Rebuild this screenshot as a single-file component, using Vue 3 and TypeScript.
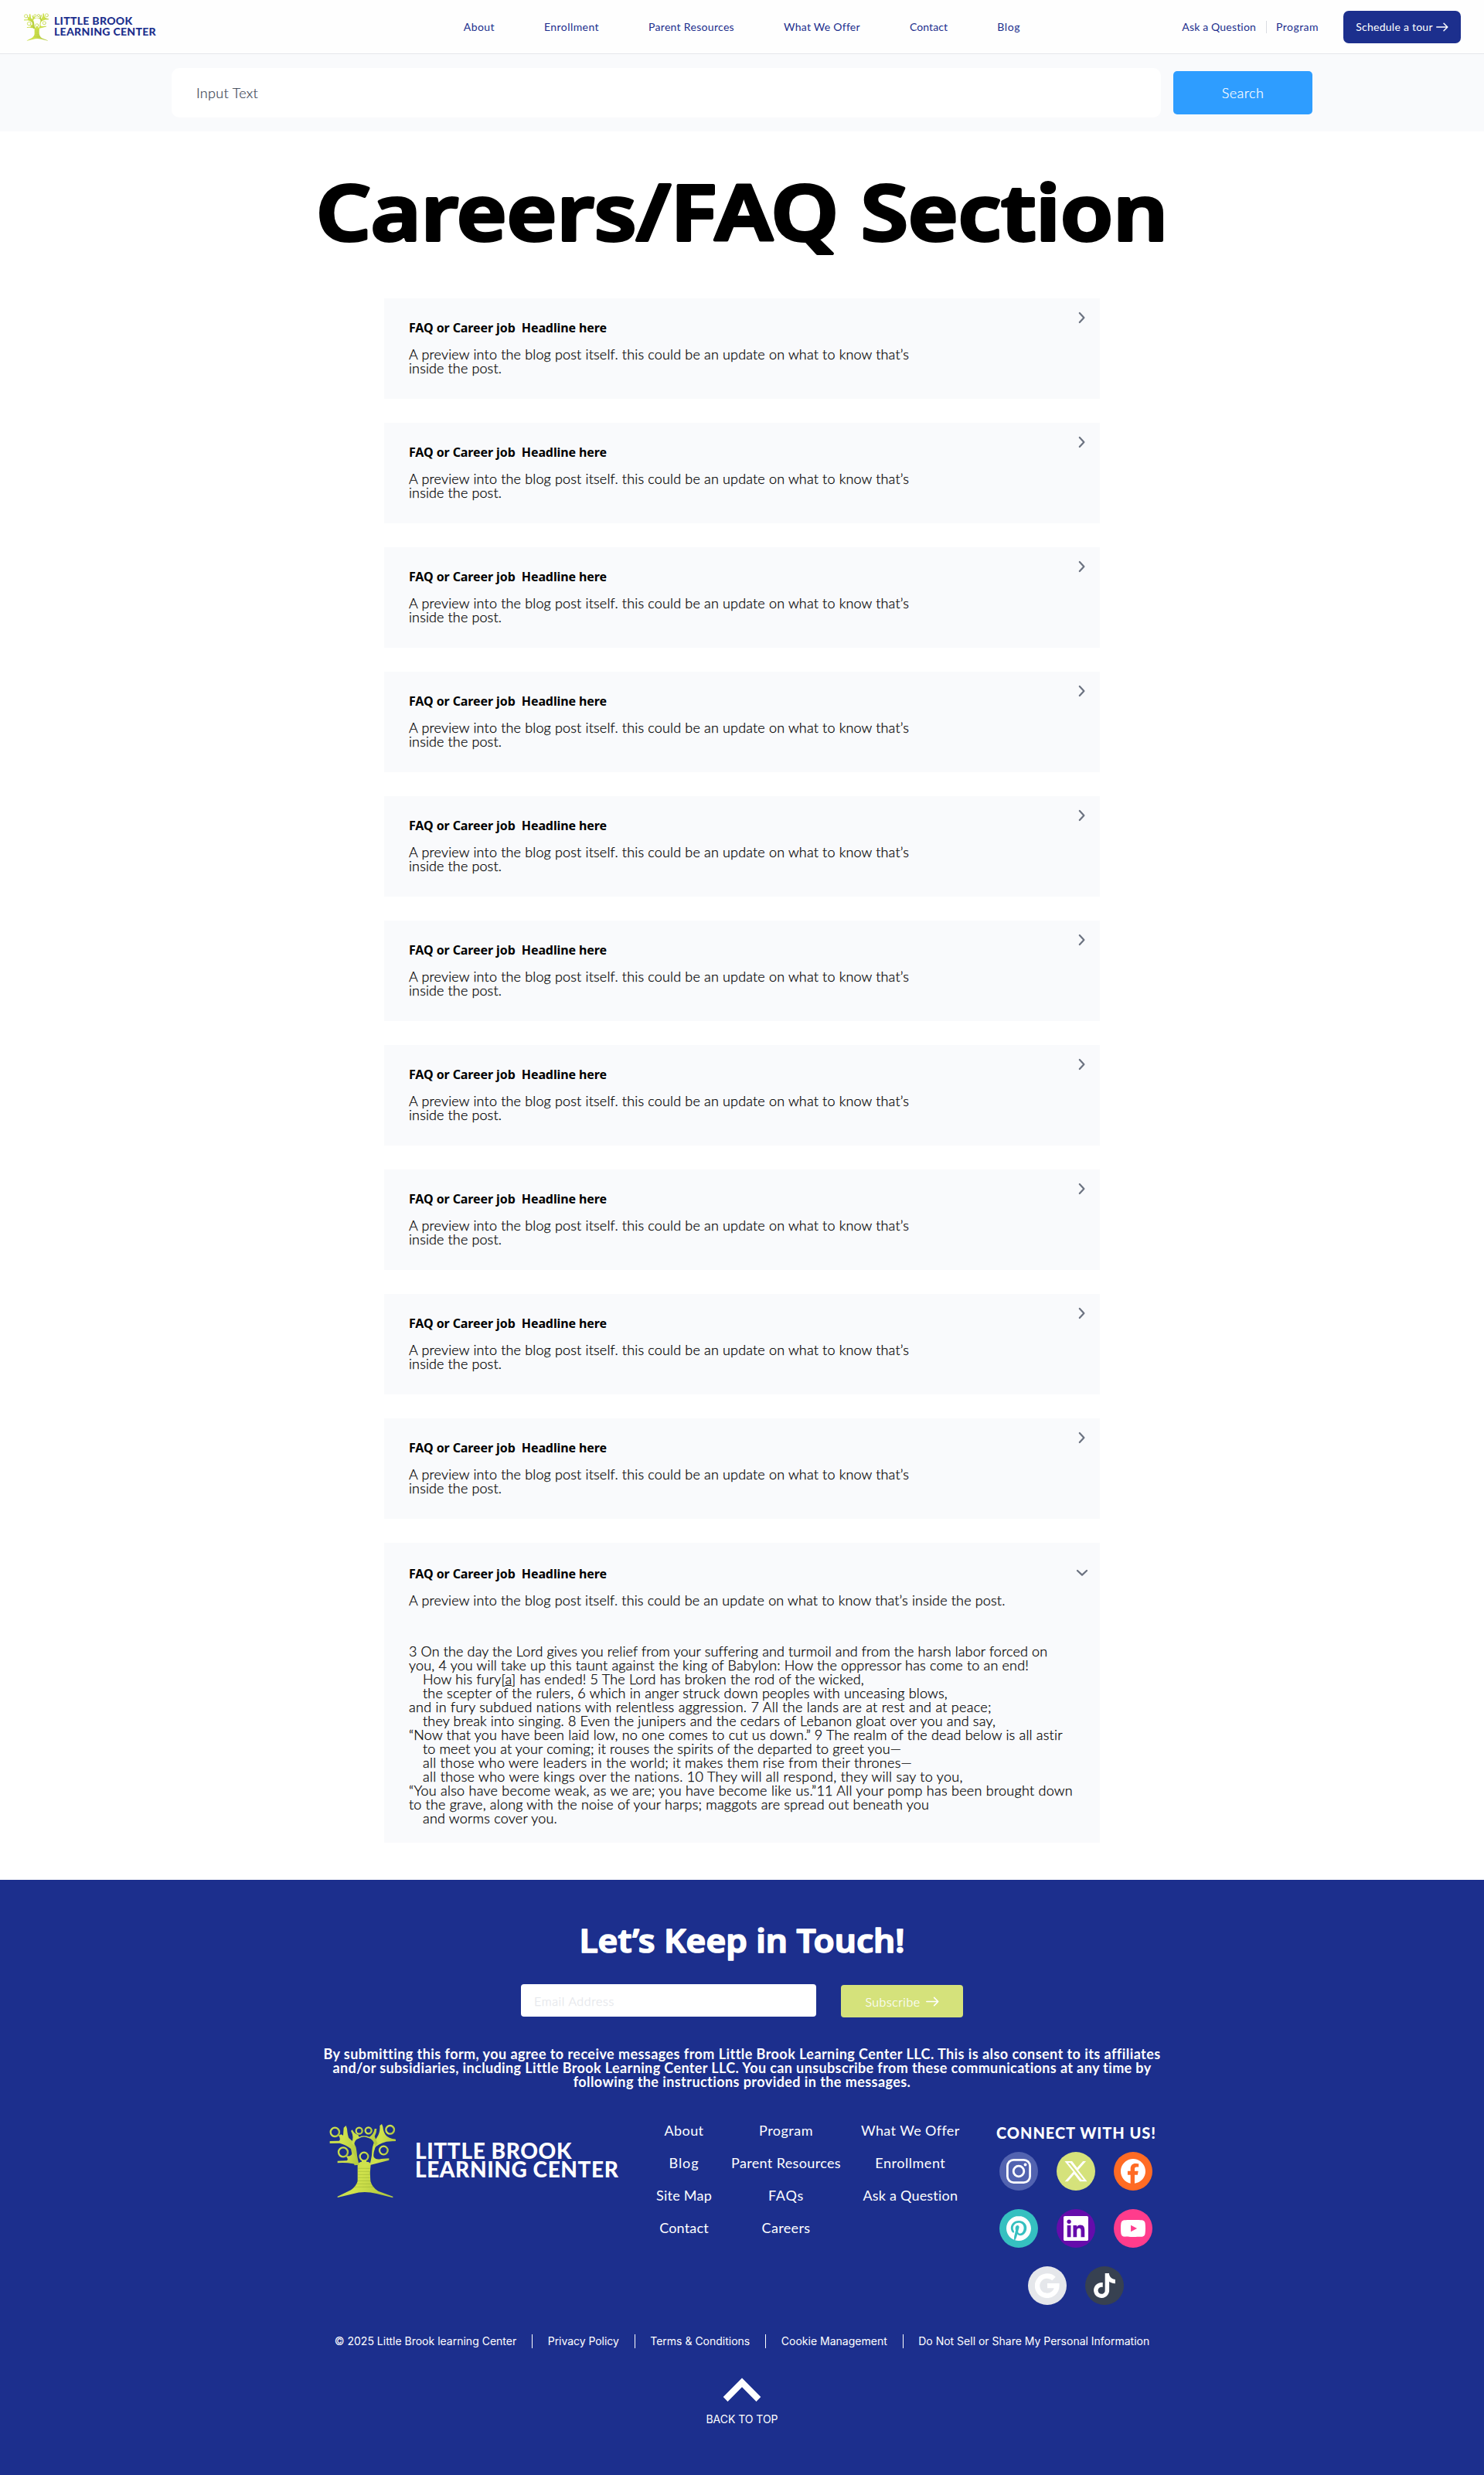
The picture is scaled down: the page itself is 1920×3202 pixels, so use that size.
<script setup lang="ts">
import type { Directive } from 'vue'

// Tracks a single line of text so that it fills the given width in pixels.
const vFit: Directive<HTMLElement, number> = {
  mounted(el, { value }) {
    const count = (el.textContent ?? '').length
    const natural = el.getBoundingClientRect().width
    if (count > 0) el.style.letterSpacing = `${((value - natural) / count).toFixed(4)}px`
  },
}

interface Item { label: string; width: number }
interface Verse { text: string; note?: string; rest?: string; width: number; indent?: boolean }
interface Social { name: string; color: string; path?: string; shape?: string }

const nav: Item[] = [
  { label: 'About', width: 40.2 },
  { label: 'Enrollment', width: 71 },
  { label: 'Parent Resources', width: 111 },
  { label: 'What We Offer', width: 98.4 },
  { label: 'Contact', width: 49.3 },
  { label: 'Blog', width: 30 },
]

const headline = 'FAQ or Career job\u00a0 Headline here'
const closedCards = Array.from({ length: 10 }, (_, i) => i)

const verses: Verse[] = [
  { text: '3 On the day the Lord gives you relief from your suffering and turmoil and from the harsh labor forced on', width: 825.5 },
  { text: 'you, 4 you will take up this taunt against the king of Babylon: How the oppressor has come to an end!', width: 802 },
  { text: 'How his fury[', note: 'a', rest: '] has ended! 5 The Lord has broken the rod of the wicked,', width: 571, indent: true },
  { text: 'the scepter of the rulers, 6 which in anger struck down peoples with unceasing blows,', width: 679, indent: true },
  { text: 'and in fury subdued nations with relentless aggression. 7 All the lands are at rest and at peace;', width: 754 },
  { text: 'they break into singing. 8 Even the junipers and the cedars of Lebanon gloat over you and say,', width: 741, indent: true },
  { text: '“Now that you have been laid low, no one comes to cut us down.” 9 The realm of the dead below is all astir', width: 846 },
  { text: 'to meet you at your coming; it rouses the spirits of the departed to greet you—', width: 619, indent: true },
  { text: 'all those who were leaders in the world; it makes them rise from their thrones—', width: 633, indent: true },
  { text: 'all those who were kings over the nations. 10 They will all respond, they will say to you,', width: 699, indent: true },
  { text: '“You also have become weak, as we are; you have become like us.”11 All your pomp has been brought down', width: 859 },
  { text: 'to the grave, along with the noise of your harps; maggots are spread out beneath you', width: 673 },
  { text: 'and worms cover you.', width: 174, indent: true },
]

const consent: Item[] = [
  { label: 'By submitting this form, you agree to receive messages from Little Brook Learning Center LLC. This is also consent to its affiliates', width: 1081 },
  { label: 'and/or subsidiaries, including Little Brook Learning Center LLC. You can unsubscribe from these communications at any time by', width: 1059 },
  { label: 'following the instructions provided in the messages.', width: 437 },
]

const columns: Item[][] = [
  [{ label: 'About', width: 51 }, { label: 'Blog', width: 39 }, { label: 'Site Map', width: 72 }, { label: 'Contact', width: 63.5 }],
  [{ label: 'Program', width: 70 }, { label: 'Parent Resources', width: 142 }, { label: 'FAQs', width: 46 }, { label: 'Careers', width: 63 }],
  [{ label: 'What We Offer', width: 127 }, { label: 'Enrollment', width: 91 }, { label: 'Ask a Question', width: 123 }],
]

const socialRows: Social[][] = [
  [
    { name: 'Instagram', color: '#5263b0', shape: 'instagram' },
    { name: 'X', color: '#d5e27b', path: 'M18.9 2.2h2.9l-7.6 8.7L22.9 21.9h-7l-5.5-7.1-6.2 7.1H1.3l8.2-9.3L1.1 2.2h7.2l4.9 6.5ZM17.6 20.2h2L6.5 3.8H4.4Z' },
    { name: 'Facebook', color: '#ff6b24', path: 'M24 12.073c0-6.627-5.373-12-12-12s-12 5.373-12 12c0 5.99 4.1 10.7 9.5 11.7v-8.3H6.7v-3.6h2.8V9.6c0-3.3 1.9-5.1 4.8-5.1 1.4 0 3.1.2 3.1.2v3.2h-1.8c-1.7 0-2.1.9-2.1 2v2h3.5l-.6 3.6h-2.9v8.4C19.612 23.027 24 18.062 24 12.073z' },
  ],
  [
    { name: 'Pinterest', color: '#35c0c0', path: 'M12.017 0C5.396 0 .029 5.367.029 11.987c0 5.079 3.158 9.417 7.618 11.162-.105-.949-.199-2.403.041-3.439.219-.937 1.406-5.957 1.406-5.957s-.359-.72-.359-1.781c0-1.663.967-2.911 2.168-2.911 1.024 0 1.518.769 1.518 1.688 0 1.029-.653 2.567-.992 3.992-.285 1.193.6 2.165 1.775 2.165 2.128 0 3.768-2.245 3.768-5.487 0-2.861-2.063-4.869-5.008-4.869-3.41 0-5.409 2.562-5.409 5.199 0 1.033.394 2.143.889 2.741.099.12.112.225.085.345-.09.375-.293 1.199-.334 1.363-.053.225-.172.271-.401.165-1.495-.69-2.433-2.878-2.433-4.646 0-3.776 2.748-7.252 7.92-7.252 4.158 0 7.392 2.967 7.392 6.923 0 4.135-2.607 7.462-6.233 7.462-1.214 0-2.354-.629-2.758-1.379l-.749 2.848c-.269 1.045-1.004 2.352-1.498 3.146 1.123.345 2.306.535 3.55.535 6.607 0 11.985-5.365 11.985-11.987C23.97 5.39 18.592.026 11.985.026L12.017 0z' },
    { name: 'LinkedIn', color: '#650cab', path: 'M20.447 20.452h-3.554v-5.569c0-1.328-.027-3.037-1.852-3.037-1.853 0-2.136 1.445-2.136 2.939v5.667H9.351V9h3.414v1.561h.046c.477-.9 1.637-1.85 3.37-1.85 3.601 0 4.267 2.37 4.267 5.455v6.286zM5.337 7.433c-1.144 0-2.063-.926-2.063-2.065 0-1.138.92-2.063 2.063-2.063 1.14 0 2.064.925 2.064 2.063 0 1.139-.925 2.065-2.064 2.065zm1.782 13.019H3.555V9h3.564v11.452zM22.6 0H1.4C.6 0 0 .6 0 1.4v21.2C0 23.4.6 24 1.4 24h21.2c.8 0 1.4-.6 1.4-1.4V1.4C24 .6 23.4 0 22.6 0z' },
    { name: 'YouTube', color: '#ff3c8c', path: 'M23.498 6.186a3.016 3.016 0 0 0-2.122-2.136C19.505 3.745 12 3.745 12 3.745s-7.505 0-9.377.305A3.017 3.017 0 0 0 .502 6.186C0 8.07 0 12 0 12s0 3.93.502 5.814a3.016 3.016 0 0 0 2.122 2.136c1.871.305 9.376.305 9.376.305s7.505 0 9.377-.305a3.015 3.015 0 0 0 2.122-2.136C24 15.93 24 12 24 12s0-3.93-.502-5.814zM9.8 8.8v6.3L15.8 12z' },
  ],
  [
    { name: 'Google', color: '#e5e7eb', shape: 'google' },
    { name: 'TikTok', color: '#374151', path: 'M12.525.02c1.31-.02 2.61-.01 3.91-.02.08 1.53.63 3.09 1.75 4.17 1.12 1.11 2.7 1.62 4.24 1.79v4.03c-1.44-.05-2.89-.35-4.2-.97-.57-.26-1.1-.59-1.62-.93-.01 2.92.01 5.84-.02 8.75-.08 1.4-.54 2.79-1.35 3.94-1.31 1.92-3.58 3.17-5.91 3.21-1.43.08-2.86-.31-4.08-1.03-2.02-1.19-3.44-3.37-3.65-5.71-.02-.5-.03-1-.01-1.49.18-1.9 1.12-3.72 2.58-4.96 1.66-1.44 3.98-2.13 6.15-1.72.02 1.48-.04 2.96-.04 4.44-.99-.32-2.15-.23-3.02.37-.63.41-1.11 1.04-1.36 1.75-.21.51-.15 1.07-.14 1.61.24 1.64 1.82 3.02 3.5 2.87 1.12-.01 2.19-.66 2.77-1.61.19-.33.4-.67.41-1.06.1-1.79.06-3.57.07-5.36.01-4.03-.01-8.05.02-12.07z' },
  ],
]

const legal: Item[] = [
  { label: '© 2025 Little Brook learning Center', width: 235.5 },
  { label: 'Privacy Policy', width: 92 },
  { label: 'Terms & Conditions', width: 129 },
  { label: 'Cookie Management', width: 137 },
  { label: 'Do Not Sell or Share My Personal Information', width: 299 },
]
</script>

<template>
  <div class="page">
    <svg class="defs" width="0" height="0" aria-hidden="true">
      <defs>
        <linearGradient id="bark" x1="0" x2="1" y1="0" y2="0.3">
          <stop offset="0" stop-color="#c3dc4c" />
          <stop offset="0.5" stop-color="#d0e24c" />
          <stop offset="1" stop-color="#b4cb40" />
        </linearGradient>
        <symbol id="tree" viewBox="0 0 258 288">
          <g fill="none" stroke="url(#bark)" stroke-width="7">
            <circle cx="22" cy="31" r="17" />
            <circle cx="116" cy="26" r="12" />
            <circle cx="152" cy="25" r="12" />
            <circle cx="236" cy="22" r="16" />
            <circle cx="54" cy="109" r="18" />
            <circle cx="211" cy="102" r="16" />
            <circle cx="135" cy="126" r="16" />
          </g>
          <g fill="url(#bark)">
            <path d="M110 160Q112 148 126 146V140H144V146Q158 146 161 156Q156 190 160 222Q168 248 190 260L247 281V286L184 270Q134 258 92 271L32 285V281L84 256Q104 242 110 222Z" />
            <path d="M56 14L65 6L69 18Q71 44 76 54Q104 74 106 104Q108 130 116 158L98 160Q90 128 84 96Q64 80 40 74L2 75V66L38 65Q46 58 36 44L46 40L54 44Z" />
            <path d="M72 124Q84 126 92 110L104 130Q106 146 116 160L92 154Q62 148 32 151V143L68 142Q76 138 66 126Z" />
            <path d="M196 6L204 0L208 10Q210 34 222 46Q232 56 258 59V66L222 68Q186 78 178 92Q168 120 174 130Q182 140 202 135L232 133V140Q192 150 156 160Q166 130 166 104Q168 74 186 50Q198 34 196 6Z" />
            <path d="M84 26L90 22Q94 36 112 42L116 50Q134 42 156 50Q174 38 176 18H184Q184 34 176 48L188 76L178 86Q170 56 152 54Q134 44 114 56Q98 60 96 82L86 74Q98 50 84 26Z" />
          </g>
          <g fill="none" stroke="#8ba32c" stroke-width="2" opacity="0.6">
            <path d="M112 172H158M112 184H158M112 196H158M112 208H158M108 220H162M104 232H164M96 244H174" />
          </g>
        </symbol>
        <symbol id="arrow" viewBox="0 0 16 12">
          <path d="M.8 6H14.6M10 1.2L14.8 6L10 10.8" fill="none" stroke="currentColor" stroke-width="1.5" stroke-linecap="round" stroke-linejoin="round" />
        </symbol>
      </defs>
    </svg>

    <header class="header">
      <a class="logo">
        <svg class="logo-tree"><use href="#tree" /></svg>
        <span class="logo-name">
          <span v-fit="101.5">LITTLE BROOK</span>
          <span v-fit="132">LEARNING CENTER</span>
        </span>
      </a>
      <nav class="nav">
        <a v-for="item in nav" :key="item.label" v-fit="item.width">{{ item.label }}</a>
      </nav>
      <div class="actions">
        <a v-fit="96">Ask a Question</a>
        <i class="rule"></i>
        <a v-fit="55">Program</a>
        <button class="tour"><span v-fit="99.5">Schedule a tour</span><svg width="16" height="12"><use href="#arrow" /></svg></button>
      </div>
    </header>

    <form class="search" @submit.prevent>
      <div class="search-input"><span v-fit="80">Input Text</span></div>
      <button class="search-button"><span v-fit="54.5">Search</span></button>
    </form>

    <main class="main">
      <h1 class="title">
        <svg width="1110" height="160" viewBox="0 0 1110 160">
          <text x="4" y="113" textLength="1102" lengthAdjust="spacingAndGlyphs">Careers/FAQ Section</text>
        </svg>
      </h1>

      <section class="cards">
        <article v-for="n in closedCards" :key="n" class="card">
          <h2><span v-fit="256">{{ headline }}</span></h2>
          <p><span v-fit="647">A preview into the blog post itself. this could be an update on what to know that’s</span></p>
          <p><span v-fit="120">inside the post.</span></p>
          <svg class="chevron" width="10" height="16" viewBox="0 0 10 16"><path d="M1.8 2L7.4 8L1.8 14" /></svg>
        </article>

        <article class="card open">
          <h2><span v-fit="256">{{ headline }}</span></h2>
          <p><span v-fit="771.5">A preview into the blog post itself. this could be an update on what to know that’s inside the post.</span></p>
          <div class="passage">
            <p v-for="verse in verses" :key="verse.text" :class="{ indent: verse.indent }">
              <span v-fit="verse.width">{{ verse.text }}<u v-if="verse.note">{{ verse.note }}</u>{{ verse.rest }}</span>
            </p>
          </div>
          <svg class="chevron" width="16" height="10" viewBox="0 0 16 10"><path d="M2 2L8 7.6L14 2" /></svg>
        </article>
      </section>
    </main>

    <footer class="footer">
      <h2 class="touch">
        <svg width="430" height="60" viewBox="0 0 430 60">
          <text x="4.5" y="42.5" textLength="421" lengthAdjust="spacingAndGlyphs">Let’s Keep in Touch!</text>
        </svg>
      </h2>
      <form class="subscribe" @submit.prevent>
        <div class="email"><span v-fit="104">Email Address</span></div>
        <button class="subscribe-button"><span v-fit="71">Subscribe</span><svg width="17" height="13"><use href="#arrow" /></svg></button>
      </form>
      <div class="consent">
        <p v-for="line in consent" :key="line.label"><span v-fit="line.width">{{ line.label }}</span></p>
      </div>

      <div class="footer-main">
        <a class="brand">
          <svg class="brand-tree"><use href="#tree" /></svg>
          <span class="brand-name">
            <span v-fit="203">LITTLE BROOK</span>
            <span v-fit="263.5">LEARNING CENTER</span>
          </span>
        </a>
        <div class="links">
          <ul v-for="(column, c) in columns" :key="c">
            <li v-for="link in column" :key="link.label"><a v-fit="link.width">{{ link.label }}</a></li>
          </ul>
        </div>
        <div class="connect">
          <h3><span v-fit="207">CONNECT WITH US!</span></h3>
          <div v-for="(row, r) in socialRows" :key="r" class="social-row">
            <a v-for="s in row" :key="s.name" class="social" :style="{ background: s.color }" :aria-label="s.name">
              <svg width="32" height="32" viewBox="0 0 24 24">
                <path v-if="s.path" :d="s.path" fill="#fff" fill-rule="evenodd" />
                <g v-else-if="s.shape === 'instagram'" fill="none" stroke="#fff" stroke-width="2.1">
                  <rect x="1.05" y="1.05" width="21.9" height="21.9" rx="6" />
                  <circle cx="12" cy="12" r="5.1" />
                  <circle cx="18.4" cy="5.6" r="1.45" fill="#fff" stroke="none" />
                </g>
                <path v-else d="M18.4 5.3A9.5 9.5 0 1 0 21.3 12.1H12" fill="none" stroke="#fff" stroke-width="4.8" />
              </svg>
            </a>
          </div>
        </div>
      </div>

      <div class="legal">
        <a v-for="item in legal" :key="item.label"><span v-fit="item.width">{{ item.label }}</span></a>
      </div>
      <a class="top">
        <svg width="50" height="32" viewBox="0 0 50 32"><path d="M25 0.5L49.3 25.1L43.5 31L25 12.2L6.5 31L0.7 25.1Z" fill="#fff" /></svg>
        <span v-fit="93">BACK TO TOP</span>
      </a>
    </footer>
  </div>
</template>

<style>
body {
  background: #fff;
}
</style>

<style scoped>
.page {
  width: 1920px;
  height: 3202px;
  overflow: hidden;
  background: #fff;
  font-family: Lato, "Open Sans", sans-serif;
  color: #000;
}
.defs { display: block; }
.page * { box-sizing: border-box; }
h1, h2, h3, p, ul { margin: 0; padding: 0; font-weight: inherit; }
li { list-style: none; }
span, a { white-space: nowrap; }
svg { display: block; flex: none; }
button { border: 0; padding: 0; font: inherit; }

.header {
  display: grid;
  grid-template-columns: 1fr auto 1fr;
  align-items: center;
  height: 70px;
  padding: 0 30px;
  border-bottom: 1px solid #e5e7eb;
  background: #fefefe;
  color: #1c2f8d;
  font-size: 14px;
  line-height: 20px;
}
.logo { display: flex; align-items: center; }
.logo-tree { width: 34px; height: 36px; }
.logo-name {
  display: flex;
  flex-direction: column;
  align-items: flex-start;
  margin: -1px 0 0 6px;
  font: 900 14px/14px Lato, "Open Sans", sans-serif;
}
.nav { display: flex; gap: 64px; }
.actions { display: flex; align-items: center; justify-content: flex-end; }
.rule { width: 1px; height: 16px; margin: 0 12px 0 13px; background: #d9dce1; }
.tour {
  display: flex;
  align-items: center;
  justify-content: center;
  gap: 4px;
  width: 152px;
  height: 42px;
  margin-left: 32px;
  border-radius: 7px;
  background: #1c2f8d;
  color: #fff;
}

.search {
  display: flex;
  align-items: center;
  justify-content: center;
  gap: 16px;
  height: 100px;
  background: #f9fafc;
  font-size: 18px;
  font-weight: 300;
  -webkit-text-stroke: 0.2px currentColor;
}
.search-input {
  display: flex;
  align-items: center;
  width: 1280px;
  height: 64px;
  padding-left: 32px;
  border-radius: 10px;
  background: #fff;
  color: #374151;
}
.search-button {
  width: 180px;
  height: 56px;
  border-radius: 5px;
  background: #2e9dff;
  color: #fff;
}

.title { display: flex; justify-content: center; height: 216px; padding-top: 28px; }
.title text, .touch text {
  font-family: "Noto Sans", "Open Sans", sans-serif;
  font-weight: 700;
  stroke-linejoin: round;
}
.title text { font-size: 99px; font-weight: 600; fill: #000; stroke: #000; stroke-width: 4px; }

.cards { display: flex; flex-direction: column; align-items: center; gap: 31px; }
.card {
  position: relative;
  width: 926px;
  height: 130px;
  padding: 28px 32px 0;
  background: #f9fafc;
  font-size: 18px;
  font-weight: 300;
  line-height: 18px;
}
.card h2 {
  height: 35px;
  font: 700 16px/20px "Noto Sans", "Open Sans", sans-serif;
}
.card p { height: 18px; -webkit-text-stroke: 0.25px currentColor; }
.chevron {
  position: absolute;
  top: 17px;
  right: 18px;
  fill: none;
  stroke: #6b7280;
  stroke-width: 2.2;
  stroke-linecap: round;
  stroke-linejoin: round;
}
.open { height: 388px; padding-top: 30px; }
.open .chevron { top: 34px; right: 15px; }
.passage { padding-top: 48px; }
.passage .indent { padding-left: 18px; }

.footer {
  display: flex;
  flex-direction: column;
  align-items: center;
  height: 770px;
  margin-top: 48px;
  background: #1c2f8d;
  color: #fff;
}
.touch { margin-top: 51px; }
.touch text { font-size: 41px; font-weight: 600; fill: #fff; stroke: #fff; stroke-width: 1.6px; }
.subscribe {
  display: flex;
  gap: 32px;
  margin-top: 24px;
  font-size: 16px;
  font-weight: 300;
  -webkit-text-stroke: 0.25px currentColor;
}
.email {
  display: flex;
  align-items: center;
  width: 382px;
  height: 42px;
  padding-left: 17px;
  border-radius: 4px;
  background: #fff;
  color: #e5e7eb;
}
.subscribe-button {
  display: flex;
  align-items: center;
  justify-content: center;
  gap: 7px;
  width: 158px;
  height: 42px;
  margin-top: 1px;
  border-radius: 4px;
  background: #d5e27b;
  color: #fff;
}
.consent {
  margin-top: 38px;
  font-size: 18px;
  font-weight: 700;
  line-height: 18px;
  text-align: center;
}
.consent p { height: 18px; }

.footer-main {
  display: flex;
  width: 1068px;
  height: 272px;
  margin-top: 46px;
}
.brand { display: flex; align-items: flex-start; width: 423px; }
.brand-tree { width: 86px; height: 96px; }
.brand-name {
  display: flex;
  flex-direction: column;
  align-items: flex-start;
  margin: 22px 0 0 25px;
  font: 900 28px/24px Lato, "Open Sans", sans-serif;
}
.links { display: flex; gap: 25px; margin-top: -1px; font-size: 18px; line-height: 18px; }
.links ul { display: flex; flex-direction: column; align-items: center; gap: 24px; }
.links ul:last-child { margin-left: 1px; }
.links li { height: 18px; }
.connect {
  display: flex;
  flex-direction: column;
  align-items: center;
  margin-left: auto;
  margin-right: -2px;
}
.connect h3 {
  height: 36px;
  padding-left: 2px;
  font: 900 20px/22px Lato, "Open Sans", sans-serif;
}
.social-row { display: flex; gap: 24px; margin-bottom: 24px; }
.social {
  display: flex;
  align-items: center;
  justify-content: center;
  width: 50px;
  height: 50px;
  border-radius: 50%;
}

.legal {
  display: flex;
  justify-content: center;
  height: 18px;
  font: 400 14px/18px Inter, sans-serif;
}
.legal a { padding: 0 19.75px; }
.legal a + a { border-left: 1px solid #fff; }
.top {
  display: flex;
  flex-direction: column;
  align-items: center;
  margin-top: 38px;
  font: 400 14px/18px Inter, sans-serif;
}
.top span { margin-top: 13px; }
</style>
